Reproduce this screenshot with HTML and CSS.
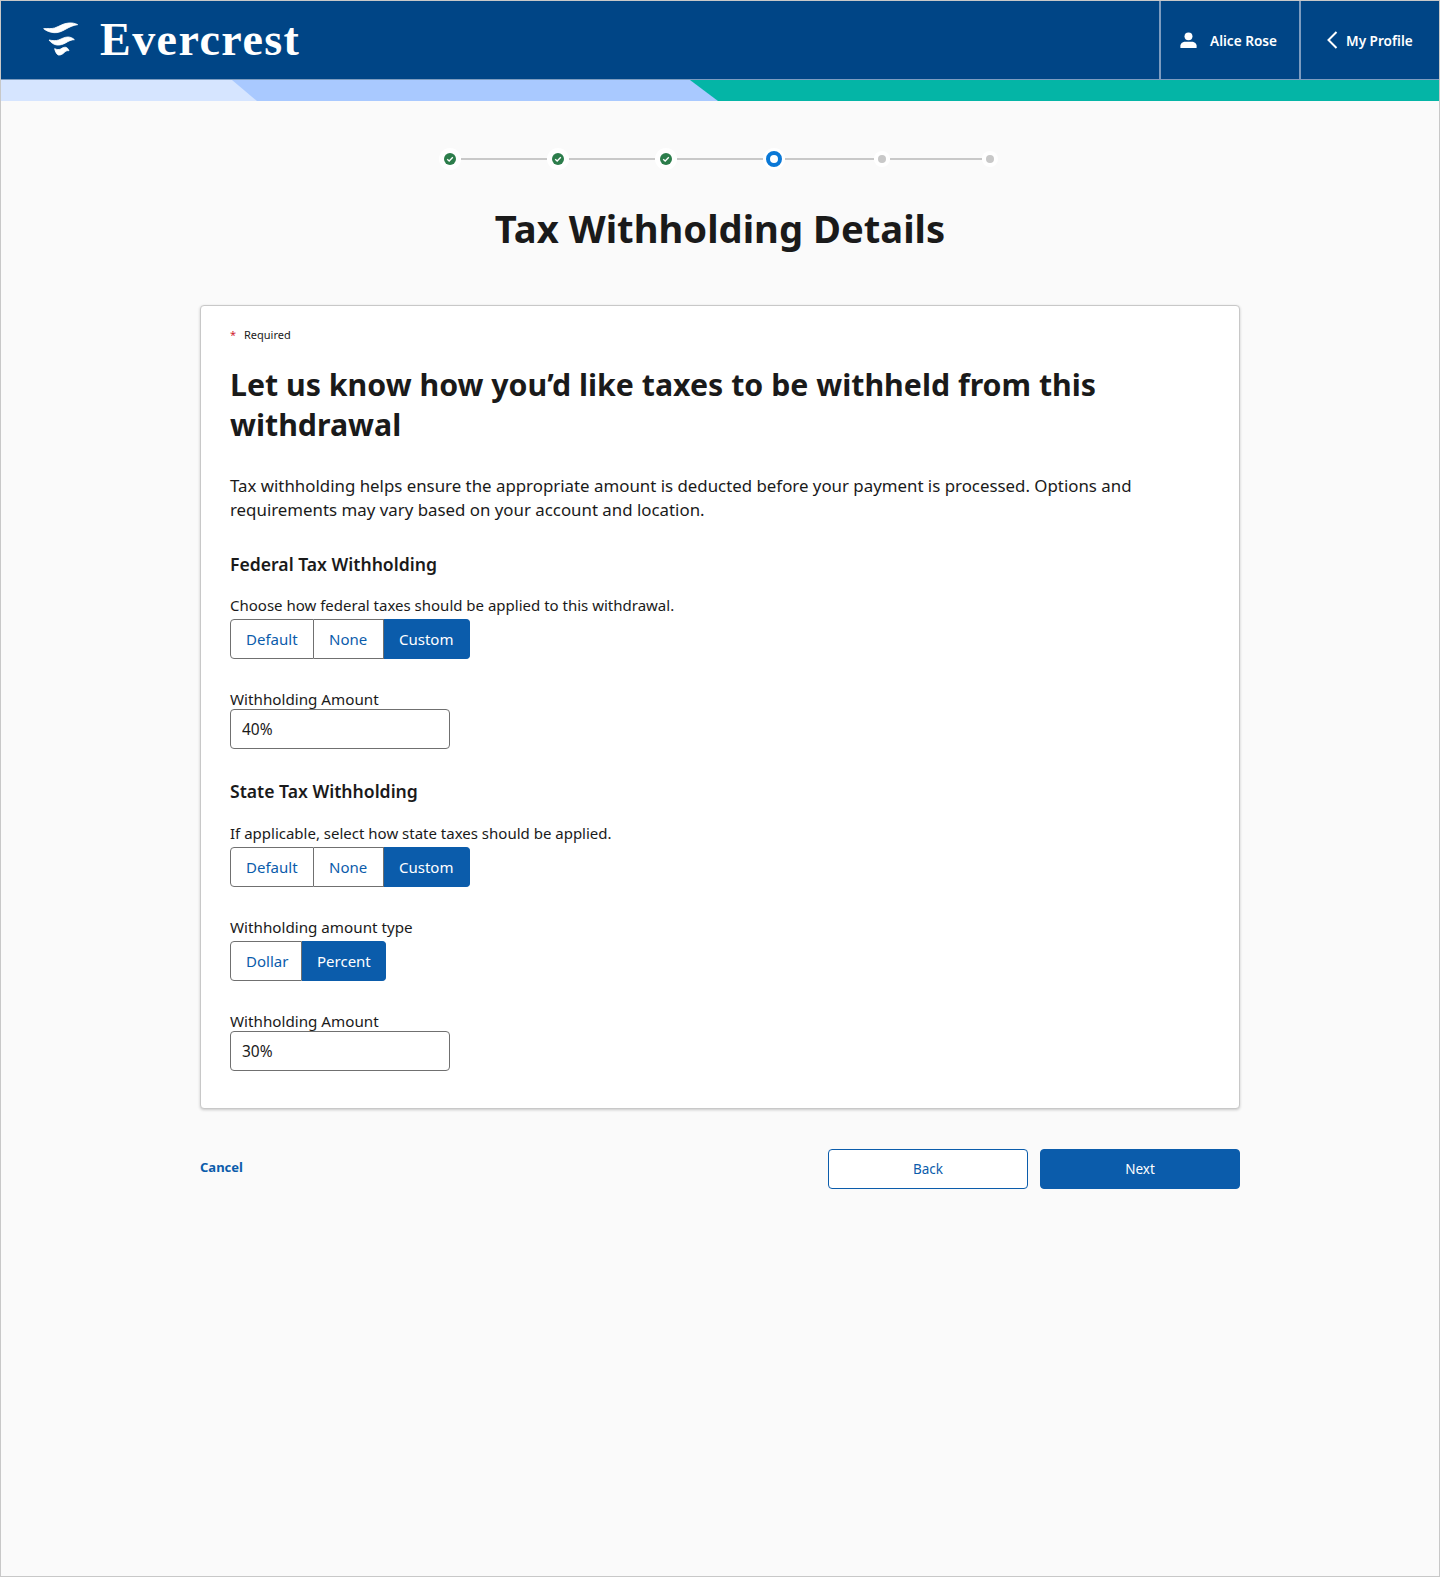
FILE: index.html
```html
<!DOCTYPE html>
<html lang="en">
<head>
  <meta charset="UTF-8">
  <title>Evercrest - Tax Withholding Details</title>
  <link rel="stylesheet" href="styles.css">
</head>
<body>

  <header class="topbar">
    <div class="brand">
      <svg class="brand-mark" viewBox="15 20 105 105" width="35" height="35" fill="#fff" stroke="#fff" stroke-width="2.5" stroke-linejoin="round">
        <path d="M17 43 C30 42 40 44 50 41 C65 36 75 27 92 26 C102 25 112 27 119 31 C108 32 96 37 84 44 C72 51 60 56 48 55 C36 54 25 50 17 43 Z"/>
        <path d="M33 77 C44 79 53 80 62 77 C72 73 80 68 90 68 C97 68 104 71 109 76 C100 76 92 80 84 85 C75 90 66 93 57 92 C47 91 39 85 33 77 Z"/>
        <path d="M50 103 C57 106 62 107 68 104 C73 101 78 98 83 99 C88 100 91 104 93 109 C87 108 82 111 78 115 C73 120 67 123 61 122 C56 120 52 112 50 103 Z"/>
      </svg>
      <span class="brand-name">Evercrest</span>
    </div>
    <nav class="topnav">
      <a class="topnav-item user-item">
        <svg viewBox="0 0 18 18" width="17" height="17" fill="#fff">
          <circle cx="9" cy="4.6" r="4.2"/>
          <path d="M1 17 C0.6 17 0.4 16.8 0.4 16.4 V14.6 C0.4 11.9 3 10.2 5.6 10.2 H12.4 C15 10.2 17.6 11.9 17.6 14.6 V16.4 C17.6 16.8 17.4 17 17 17 Z"/>
        </svg>
        Alice Rose
      </a>
      <a class="topnav-item profile-item">
        <svg viewBox="0 0 11 18" width="11" height="18" fill="none" stroke="#fff" stroke-width="2">
          <path d="M9.5 1 L1.5 9 L9.5 17"/>
        </svg>
        My Profile
      </a>
    </nav>
  </header>

  <div class="ribbon">
    <div class="ribbon-light"></div>
    <div class="ribbon-mid"></div>
  </div>

  <main class="page">
    <ol class="stepper">
      <li class="step done"><svg viewBox="0 0 12 12" width="12" height="12"><circle cx="6" cy="6" r="6" fill="#2c7d4b"/><path d="M3.2 6.2 L5.2 8 L8.8 4.2" fill="none" stroke="#fff" stroke-width="1.3"/></svg></li>
      <li class="step-line"></li>
      <li class="step done"><svg viewBox="0 0 12 12" width="12" height="12"><circle cx="6" cy="6" r="6" fill="#2c7d4b"/><path d="M3.2 6.2 L5.2 8 L8.8 4.2" fill="none" stroke="#fff" stroke-width="1.3"/></svg></li>
      <li class="step-line"></li>
      <li class="step done"><svg viewBox="0 0 12 12" width="12" height="12"><circle cx="6" cy="6" r="6" fill="#2c7d4b"/><path d="M3.2 6.2 L5.2 8 L8.8 4.2" fill="none" stroke="#fff" stroke-width="1.3"/></svg></li>
      <li class="step-line"></li>
      <li class="step current"><span class="ring"></span></li>
      <li class="step-line line-to-todo"></li>
      <li class="step todo"><span class="dot"></span></li>
      <li class="step-line line-todo"></li>
      <li class="step todo"><span class="dot"></span></li>
    </ol>

    <h1 class="page-title">Tax Withholding Details</h1>

    <section class="card">
      <p class="required"><span class="star">*</span>Required</p>
      <h2 class="card-title">Let us know how you’d like taxes to be withheld from this withdrawal</h2>
      <p class="intro">Tax withholding helps ensure the appropriate amount is deducted before your payment is processed. Options and requirements may vary based on your account and location.</p>

      <h3 class="section-title">Federal Tax Withholding</h3>
      <p class="field-label">Choose how federal taxes should be applied to this withdrawal.</p>
      <div class="toggle">
        <button class="toggle-btn w-default">Default</button>
        <button class="toggle-btn w-none">None</button>
        <button class="toggle-btn w-custom active">Custom</button>
      </div>
      <label class="field-label spaced">Withholding Amount</label>
      <input class="text-input" type="text" value="40%">

      <h3 class="section-title">State Tax Withholding</h3>
      <p class="field-label state-hint">If applicable, select how state taxes should be applied.</p>
      <div class="toggle">
        <button class="toggle-btn w-default">Default</button>
        <button class="toggle-btn w-none">None</button>
        <button class="toggle-btn w-custom active">Custom</button>
      </div>
      <label class="field-label spaced">Withholding amount type</label>
      <div class="toggle">
        <button class="toggle-btn w-dollar">Dollar</button>
        <button class="toggle-btn w-percent active">Percent</button>
      </div>
      <label class="field-label spaced">Withholding Amount</label>
      <input class="text-input" type="text" value="30%">
    </section>

    <div class="actions">
      <a class="cancel">Cancel</a>
      <div class="action-btns">
        <button class="btn btn-back">Back</button>
        <button class="btn btn-next">Next</button>
      </div>
    </div>
  </main>

</body>
</html>
```
FILE: styles.css
```css
* {
  box-sizing: border-box;
}
body {
  margin: 0;
  height: 1577px;
  border: 1px solid #c8c8c8;
  background-color: #fafafa;
  color: #1a1a1a;
  font-family: "Noto Sans", Arial, sans-serif;
  overflow: hidden;
}
.topbar {
  height: 78px;
  background-color: #004586;
  display: flex;
  justify-content: space-between;
  color: #fff;
}
.brand {
  display: flex;
  align-items: center;
  padding-left: 42px;
}
.brand-mark {
  margin: 0 22px 3px 0;
}
.brand-name {
  font-family: "Liberation Serif", serif;
  font-weight: bold;
  font-size: 46px;
  letter-spacing: 1.45px;
  line-height: 78px;
}
.topnav {
  display: flex;
}
.topnav-item {
  display: flex;
  align-items: center;
  border-left: 2px solid #7c9cc0;
  font-size: 13.6px;
  font-weight: 600;
}
.user-item {
  width: 140px;
  padding-left: 19px;
  gap: 13px;
}
.profile-item {
  width: 140px;
  padding-left: 26px;
  gap: 8px;
}
.ribbon {
  height: 22px;
  border-top: 1px solid #7c9cc0;
  background-color: #04b5a6;
  position: relative;
}
.ribbon-light, .ribbon-mid {
  height: 100%;
  position: absolute;
  left: 0;
  top: 0;
}
.ribbon-light {
  width: 256px;
  background-color: #d6e5ff;
  clip-path: polygon(0 0, 231px 0, 100% 100%, 0 100%);
  z-index: 2;
}
.ribbon-mid {
  width: 717px;
  background-color: #a9c9ff;
  clip-path: polygon(0 0, 689px 0, 100% 100%, 0 100%);
  z-index: 1;
}
.page {
  width: 1040px;
  margin: 0 auto;
}
.stepper {
  list-style: none;
  margin: 47px 4px 0 0;
  padding: 0;
  display: flex;
  align-items: center;
  justify-content: center;
  height: 22px;
}
.step {
  width: 22px;
  height: 22px;
  border-radius: 50%;
  background-color: #fff;
  display: flex;
  align-items: center;
  justify-content: center;
}
.step.todo {
  width: 16px;
  height: 16px;
}
.step svg {
  display: block;
}
.step-line {
  width: 86px;
  height: 2px;
  background-color: #c8c8c8;
}
.step-line.line-to-todo {
  width: 89px;
}
.step-line.line-todo {
  width: 92px;
}
.ring {
  width: 16px;
  height: 16px;
  border: 4px solid #0a78d6;
  border-radius: 50%;
  background-color: #fff;
}
.dot {
  width: 8px;
  height: 8px;
  border-radius: 50%;
  background-color: #c8c8c8;
}
.page-title {
  margin: 30px 0 0;
  text-align: center;
  font-size: 38.2px;
  line-height: 56px;
  font-weight: 700;
}
.card {
  margin-top: 49px;
  height: 804px;
  background-color: #fff;
  border: 1px solid #c8c8c8;
  border-radius: 4px;
  box-shadow: 0 1px 3px rgba(0, 0, 0, 0.2);
  padding: 19px 29px 0;
}
.required {
  margin: 0;
  font-size: 11px;
  line-height: 20px;
}
.star {
  color: #d1242f;
  display: inline-block;
  width: 14px;
}
.card-title {
  margin: 20px 0 0;
  font-size: 30.3px;
  line-height: 40px;
  font-weight: 700;
  width: 900px;
}
.intro {
  margin: 29px 0 0;
  font-size: 16.85px;
  line-height: 24px;
  width: 920px;
}
.section-title {
  margin: 30px 0 0;
  font-size: 17.6px;
  line-height: 24px;
  font-weight: 600;
}
.field-label {
  display: block;
  margin: 17px 0 0;
  font-size: 15px;
  line-height: 24px;
}
.field-label.state-hint {
  margin-top: 18px;
}
.field-label.spaced {
  margin-top: 28px;
  font-size: 15.2px;
}
.toggle {
  display: flex;
  margin-top: 2px;
}
.toggle-btn {
  height: 40px;
  padding: 0 0 0 15px;
  text-align: left;
  font-family: inherit;
  font-size: 15px;
  color: #0b5cab;
  background-color: #fff;
  border: 1px solid #707070;
  border-left: none;
}
.toggle-btn:first-child {
  border-left: 1px solid #707070;
  border-radius: 4px 0 0 4px;
}
.toggle-btn:last-child {
  border-radius: 0 4px 4px 0;
}
.toggle-btn.active {
  color: #fff;
  background-color: #0b5cab;
  border-color: #0b5cab;
}
.w-default { width: 84px; }
.w-none { width: 70px; }
.w-custom { width: 86px; }
.w-dollar { width: 72px; }
.w-percent { width: 84px; }
.text-input {
  display: block;
  width: 220px;
  height: 40px;
  margin-top: -2px;
  padding: 0 11px;
  font-family: inherit;
  font-size: 15.5px;
  color: #1a1a1a;
  background-color: #fff;
  border: 1px solid #707070;
  border-radius: 4px;
}
.actions {
  margin-top: 40px;
  display: flex;
  justify-content: space-between;
}
.cancel {
  margin-top: 7px;
  font-size: 13px;
  line-height: 22px;
  font-weight: 700;
  color: #0b5cab;
}
.action-btns {
  display: flex;
  gap: 12px;
}
.btn {
  width: 200px;
  height: 40px;
  font-family: inherit;
  font-size: 13.5px;
  border: 1px solid #0b5cab;
  border-radius: 4px;
}
.btn-back {
  background-color: #fff;
  color: #0b5cab;
}
.btn-next {
  background-color: #0b5cab;
  color: #fff;
}
```
